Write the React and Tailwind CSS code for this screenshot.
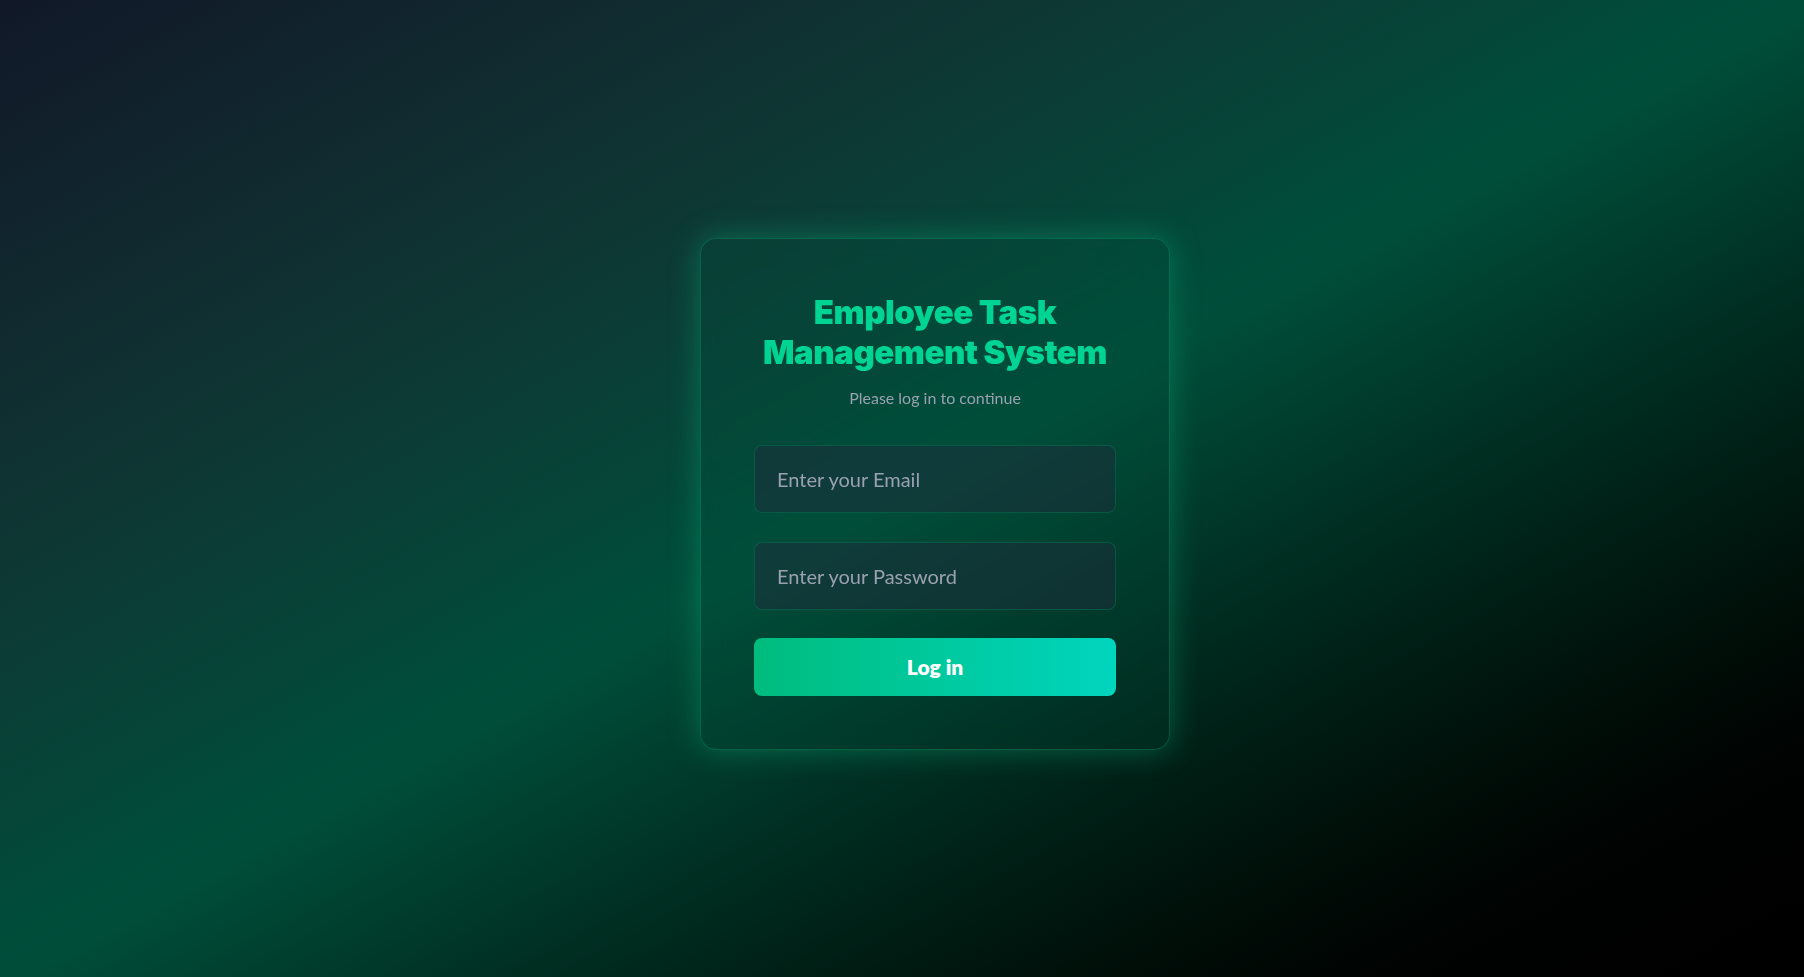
export default function App() {
  return (
    <div
      className="min-h-screen w-full flex items-center justify-center pt-[11px] bg-gradient-to-br from-gray-900 via-emerald-900 to-black"
      style={{ fontFamily: "Lato, 'Noto Sans', sans-serif" }}
    >
      <div className="ml-[66px] w-[470px] rounded-2xl border border-emerald-500/30 bg-emerald-900/20 backdrop-blur-md p-[53px] shadow-[0_0_30px_rgba(16,185,129,0.4)]">
        <h1
          className="text-center text-[33px] leading-[40px] font-black tracking-[-0.5px] whitespace-nowrap text-emerald-400"
          style={{ fontFamily: "Inter, 'Noto Sans', sans-serif" }}
        >
          Employee Task
          <br />
          Management System
        </h1>
        <p className="mt-[14px] text-center text-base leading-6 text-gray-400">
          Please log in to continue
        </p>
        <form className="mt-[35px] flex flex-col" onSubmit={(e) => e.preventDefault()}>
          <input
            type="email"
            placeholder="Enter your Email"
            className="h-[68px] w-full rounded-lg border border-emerald-700/50 bg-gray-800/50 px-[22px] text-[20px] text-white placeholder:text-gray-400 outline-none"
          />
          <input
            type="password"
            placeholder="Enter your Password"
            className="mt-[29px] h-[68px] w-full rounded-lg border border-emerald-700/50 bg-gray-800/50 px-[22px] text-[20px] text-white placeholder:text-gray-400 outline-none"
          />
          <button
            type="submit"
            className="mt-[28px] h-[58px] w-full rounded-lg bg-gradient-to-r from-emerald-500 to-teal-400 text-[21px] font-extrabold text-white"
          >
            Log in
          </button>
        </form>
      </div>
    </div>
  );
}
